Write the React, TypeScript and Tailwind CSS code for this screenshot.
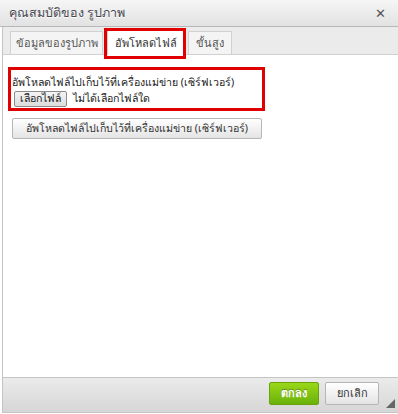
export default function App() {
  return (
    <div className="w-[398px] h-[414px] bg-white overflow-hidden font-['Tahoma','Noto_Sans','DejaVu_Sans',sans-serif] text-[11px] text-[#333]">
      {/* title bar */}
      <div className="h-[27px] flex items-center justify-between pl-[9px] pr-[12px] bg-gradient-to-b from-[#f6f6f6] to-[#e2e2e2] border-b border-[#b8b8b8]">
        <span className="text-[12.5px] text-[#474750] [text-shadow:0_1px_0_#fff]">คุณสมบัติของ รูปภาพ</span>
        <span className="text-[13px] font-bold text-[#555] leading-none">✕</span>
      </div>

      {/* tabs */}
      <div className="ml-[2px] h-[28px] bg-[#ebebeb] border-l border-[#c4c4c4] flex items-end pl-[7px] gap-[4px] border-b border-b-[#d1d1d1]">
        <div className="h-[23px] w-[93px] flex items-center justify-center bg-[#f4f4f4] border border-b-0 border-[#d1d1d1] text-[#555]">
          ข้อมูลของรูปภาพ
        </div>
        <div className="relative -mb-[1px] h-[25px] w-[77px] flex items-center justify-center bg-white border border-b-0 border-[#d1d1d1] text-[#333]">
          อัพโหลดไฟล์
          <span className="absolute -left-[4px] -right-[3px] -top-[3px] -bottom-[4px] border-[3px] border-[#e00000]" />
        </div>
        <div className="h-[23px] w-[44px] flex items-center justify-center bg-[#f4f4f4] border border-b-0 border-[#d1d1d1] text-[#555]">
          ขั้นสูง
        </div>
      </div>

      {/* body */}
      <div className="ml-[2px] h-[322px] border-l border-[#c4c4c4] bg-white pt-[12px] pl-[5px]">
        <div className="w-[257px] border-[3px] border-[#e00000] px-[1px] pt-[4px] pb-[1px] text-[#222] whitespace-nowrap text-[10.6px]">
          <div className="leading-[16px]">อัพโหลดไฟล์ไปเก็บไว้ที่เครื่องแม่ข่าย (เซิร์ฟเวอร์)</div>
          <div className="flex items-center gap-[6px] mt-[1px] ml-[2px]">
            <span className="h-[16px] px-[5px] flex items-center border border-[#8a8a8a] rounded-[2px] bg-gradient-to-b from-[#f4f4f4] to-[#dcdcdc] text-[#222]">
              เลือกไฟล์
            </span>
            <span>ไม่ได้เลือกไฟล์ใด</span>
          </div>
        </div>
        <div className="mt-[7px] ml-[4px] w-[250px] h-[21px] flex items-center justify-center whitespace-nowrap text-[10.6px] border border-[#b6b6b6] rounded-[2px] bg-gradient-to-b from-[#ffffff] to-[#e4e4e4] text-[#333]">
          อัพโหลดไฟล์ไปเก็บไว้ที่เครื่องแม่ข่าย (เซิร์ฟเวอร์)
        </div>
      </div>

      {/* footer */}
      <div className="relative ml-[2px] h-[36px] border-l border-t border-b border-[#c4c4c4] bg-gradient-to-b from-[#ebebeb] to-[#d6d6d6] flex items-start justify-end pt-[4px] pr-[19px] gap-[6px]">
        <div className="w-[50px] h-[23px] flex items-center justify-center rounded-[2px] border border-[#6aa20c] bg-gradient-to-b from-[#9ad717] to-[#69b10b] text-white font-bold [text-shadow:0_-1px_0_#5a8d08]">
          ตกลง
        </div>
        <div className="w-[54px] h-[23px] flex items-center justify-center rounded-[2px] border border-[#b6b6b6] bg-gradient-to-b from-[#ffffff] to-[#e4e4e4] text-[#333]">
          ยกเลิก
        </div>
        <svg className="absolute right-[3px] bottom-[4px]" width="9" height="9" viewBox="0 0 9 9">
          <polygon points="9,0 9,9 0,9" fill="#666" />
        </svg>
      </div>
    </div>
  );
}
